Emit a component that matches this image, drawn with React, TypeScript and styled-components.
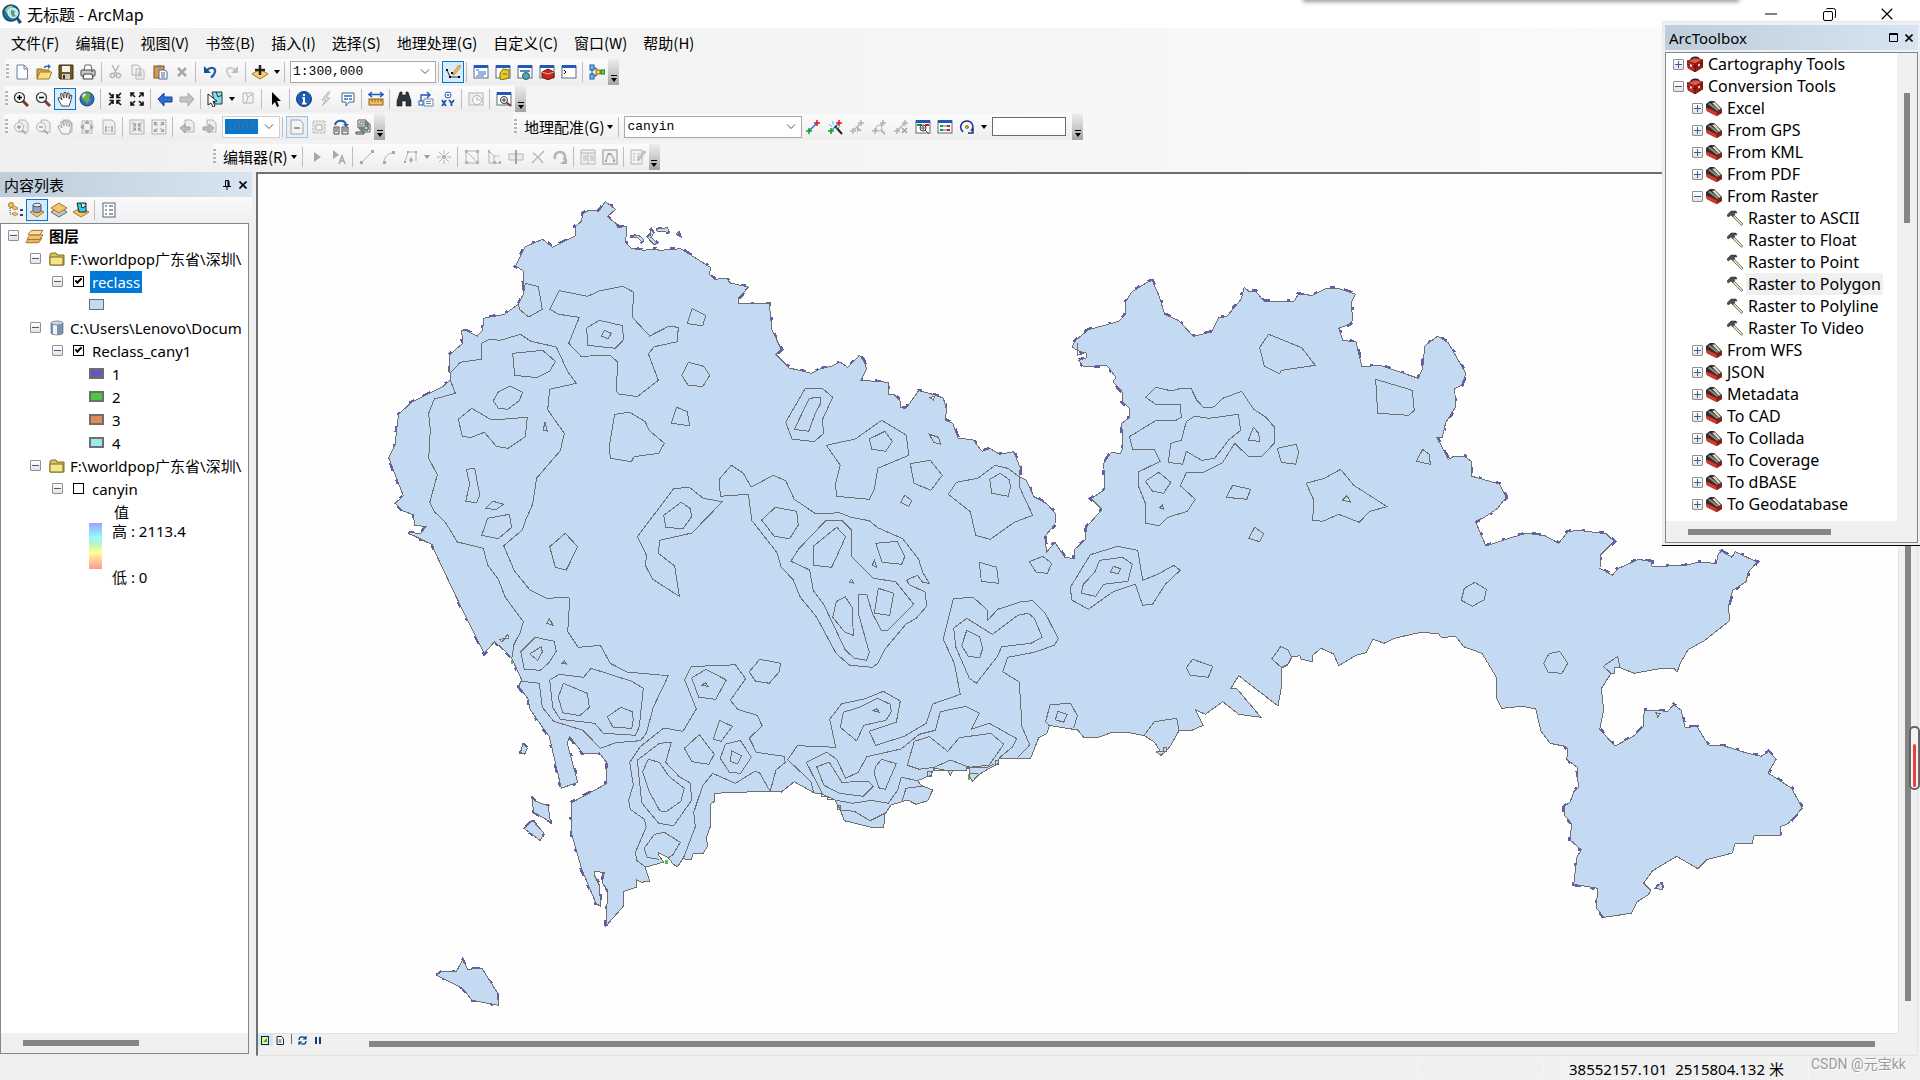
import React from "react";
import styled, { createGlobalStyle, css } from "styled-components";

const UI = `"Noto Sans", "Noto Sans CJK SC", sans-serif`;
const CJK = `"Noto Sans CJK SC", sans-serif`;

const Global = createGlobalStyle`
  *, *::before, *::after { box-sizing: border-box; }
  html, body, #root { height: 100%; }
  body { margin: 0; overflow: hidden; background: #f0f0f0; color: #000; font: 15px/22px ${UI}; }
  button, input, select { font: inherit; color: inherit; margin: 0; padding: 0; border: 0; background: none; border-radius: 0; }
`;

/* ---------- frame ---------- */

const Window = styled.div`
  position: relative;
  height: 100vh;
  display: flex;
  flex-direction: column;
  background: linear-gradient(90deg, #f0f0f0 0%, #f5f5f5 45%, #fafafa 85%);
`;
const TitleBar = styled.header`
  display: flex;
  align-items: center;
  height: 28px;
  padding-left: 2px;
  gap: 5px;
  background: #fff;
  font: 15px/22px ${CJK};
`;
const Title = styled.h1`
  flex: 1;
  margin: 0;
  font-size: 16px;
  font-weight: 400;
`;
const CaptionButton = styled.button`
  width: 58px;
  height: 28px;
  display: grid;
  place-items: center;
`;
const CaptionGroup = styled.div`
  display: flex;
  padding-right: 4px;
`;
const DropShadow = styled.div`
  position: absolute;
  top: -6px;
  right: 182px;
  width: 434px;
  height: 6px;
  box-shadow: 0 1px 4px 1px #999;
`;
const MenuBar = styled.nav`
  display: flex;
  height: 30px;
  padding-left: 3px;
  font: 15px/30px ${CJK};
`;
const MenuItem = styled.button`
  padding: 0 8px;
  line-height: 30px;
`;

/* ---------- toolbars ---------- */

const ToolRow = styled.div<{ $indent?: number; $h: number }>`
  display: flex;
  align-items: center;
  height: ${(p) => p.$h}px;
  padding-left: ${(p) => p.$indent ?? 4}px;
`;
const Bar = styled.div<{ $after?: number }>`
  display: flex;
  align-items: center;
  height: 26px;
  margin-left: ${(p) => p.$after ?? 0}px;
  background: linear-gradient(#fbfbfb, #f4f4f4 60%, #ededed);
  border-radius: 3px 0 0 3px;
`;
const Handle = styled.span`
  width: 3px;
  height: 16px;
  margin: 0 2px 0 1px;
  background: repeating-linear-gradient(#b4b4b4 0 2px, transparent 2px 4px);
`;
const Sep = styled.span`
  width: 1px;
  height: 20px;
  margin: 0 3px 0 2px;
  background: #bdbdbd;
`;
const ToolButton = styled.button<{ $on?: boolean; $soft?: boolean }>`
  width: 22px;
  height: 22px;
  display: grid;
  place-items: center;
  flex: none;
  ${(p) => p.$on && css`background: #d9ebf9; box-shadow: inset 0 0 0 1px #0078d7;`}
  ${(p) => p.$soft && css`background: #e8eef3; box-shadow: inset 0 0 0 1px #9cc3e0;`}
`;
const CaretButton = styled.button`
  width: 11px;
  height: 22px;
  display: grid;
  place-items: center;
`;
const Caret = styled.i<{ $dim?: boolean }>`
  border: 3px solid transparent;
  border-top: 4px solid ${(p) => (p.$dim ? "#9a9a9a" : "#000")};
  border-bottom: 0;
`;
const Overflow = styled.button`
  width: 11px;
  height: 26px;
  display: flex;
  flex-direction: column;
  align-items: center;
  justify-content: flex-end;
  gap: 2px;
  padding-bottom: 3px;
  background: linear-gradient(#ececec, #c9c9c9 55%, #a2a2a2);
  &::before { content: ""; width: 6px; height: 1px; background: #000; }
`;
const BarMenu = styled.button`
  display: flex;
  align-items: center;
  gap: 3px;
  padding: 0 3px 0 5px;
  font: 15px/22px ${CJK};
`;
const ComboBox = styled.label<{ $w: number; $faded?: boolean }>`
  position: relative;
  display: flex;
  align-items: center;
  width: ${(p) => p.$w}px;
  height: 22px;
  margin-left: 2px;
  background: #fff;
  border: 1px solid ${(p) => (p.$faded ? "#cfcfcf" : "#a8a8a8")};
  select {
    appearance: none;
    width: 100%;
    height: 20px;
    padding: 0 20px 0 2px;
    outline: 0;
    font: 13px/20px "Liberation Mono", monospace;
    ${(p) => p.$faded && css`
      color: #4c6f90;
      background: linear-gradient(#0078d7, #0078d7) 2px 2px / 33px 15px no-repeat;
      opacity: 1;
    `}
  }
  svg { position: absolute; right: 5px; pointer-events: none; }
`;
const RotateBox = styled.input`
  width: 74px;
  height: 19px;
  margin: 0 6px 0 3px;
  background: #fff;
  border: 1px solid #6b6b6b;
`;

/* ---------- workspace ---------- */

const Workspace = styled.main`
  flex: 1;
  min-height: 0;
  display: flex;
  gap: 4px;
  background: #f0f0f0;
`;
const Contents = styled.aside`
  width: 252px;
  display: flex;
  flex-direction: column;
  padding-bottom: 2px;
`;
const PanelHead = styled.div`
  display: flex;
  align-items: center;
  justify-content: flex-end;
  gap: 4px;
  height: 25px;
  flex: none;
  padding: 0 3px 0 4px;
  background: linear-gradient(90deg, #bfcddb, #d7e4f2);
  h2 { flex: 1; margin: 0; font: 400 15px/24px ${UI}; }
  button { width: 12px; height: 16px; display: grid; place-items: center; }
`;
const ContentsTools = styled.div`
  display: flex;
  align-items: center;
  height: 26px;
  flex: none;
  padding-left: 4px;
  background: linear-gradient(#fafafa, #efefef);
`;
const TreeBox = styled.div<{ $inset?: number }>`
  flex: 1;
  min-height: 0;
  display: flex;
  flex-direction: column;
  margin-right: ${(p) => p.$inset ?? 0}px;
  border: 1px solid #828790;
  background: #fff;
`;
const TreeBody = styled.div`
  flex: 1;
  min-height: 0;
  display: flex;
`;
const Tree = styled.ul<{ $size?: number }>`
  flex: 1;
  min-width: 0;
  margin: 0;
  padding: 0;
  list-style: none;
  overflow: hidden;
  font-size: ${(p) => p.$size ?? 15}px;
`;
const Node = styled.li<{ $pad: number; $h: number; $gap: number; $bold?: boolean }>`
  display: flex;
  align-items: center;
  height: ${(p) => p.$h}px;
  padding-left: ${(p) => p.$pad}px;
  gap: ${(p) => p.$gap}px;
  font-weight: ${(p) => (p.$bold ? 700 : 400)};
  white-space: pre;
  svg { flex: none; }
`;
const IconSlot = styled.span`
  display: flex;
  padding-left: 3px;
`;
const Expander = styled.button<{ $open?: boolean }>`
  width: 11px;
  height: 11px;
  flex: none;
  border: 1px solid #919191;
  border-radius: 1px;
  background:
    linear-gradient(#3c5a9c, #3c5a9c) center / 7px 1px no-repeat,
    linear-gradient(#3c5a9c, #3c5a9c) center / 1px ${(p) => (p.$open ? 0 : 7)}px no-repeat,
    linear-gradient(#fff, #e2e2e2);
`;
const Check = styled.label`
  display: flex;
  align-items: center;
  gap: 6px;
  input {
    appearance: none;
    width: 11px;
    height: 11px;
    border: 1px solid #000;
    background: #fff;
  }
  input:checked::after {
    content: "";
    display: block;
    width: 7px;
    height: 4px;
    margin: 1px;
    border-left: 2px solid #000;
    border-bottom: 2px solid #000;
    transform: rotate(-45deg);
  }
`;
const LayerName = styled.span<{ $state?: "selected" | "hover" }>`
  padding: 0 2px;
  line-height: 22px;
  ${(p) => p.$state === "selected" && css`background: #0078d7; color: #fff;`}
  ${(p) => p.$state === "hover" && css`background: #f0f0f0;`}
`;
const Swatch = styled.i<{ $c: string; $thin?: boolean }>`
  width: 15px;
  height: 11px;
  border: ${(p) => (p.$thin ? 1 : 2)}px solid #6e6e6e;
  background: ${(p) => p.$c};
`;
const RampRow = styled.li`
  display: flex;
  gap: 10px;
  height: 58px;
  padding-left: 88px;
`;
const Ramp = styled.i`
  width: 13px;
  height: 46px;
  background: linear-gradient(#9ca4ff, #96fbff 32%, #b6f5c4 45%, #ffff96 65%, #ff9696);
`;
const RampLabels = styled.div`
  display: flex;
  flex-direction: column;
  justify-content: space-between;
  height: 62px;
  line-height: 16px;
`;
const ScrollTrack = styled.div<{ $vertical?: boolean; $size: number; $from: string; $to: string }>`
  flex: none;
  display: flex;
  align-items: center;
  justify-content: center;
  background: #f0f0f0;
  ${(p) =>
    p.$vertical
      ? css`width: ${p.$size}px; padding: ${p.$from} 0 ${p.$to};`
      : css`height: ${p.$size}px; padding: 0 ${p.$to} 0 ${p.$from};`}
  &::before {
    content: "";
    background: #858585;
    ${(p) => (p.$vertical ? css`width: 6px; height: 100%;` : css`height: 6px; width: 100%;`)}
  }
`;

const MapFrame = styled.section`
  flex: 1;
  min-width: 0;
  display: flex;
  flex-direction: column;
  margin-right: 2px;
  border: 2px solid #6f6f6f;
  border-right: 1px solid #e3e3e3;
  border-bottom: 1px solid #e3e3e3;
`;
const MapRow = styled.div`
  flex: 1;
  min-height: 0;
  display: flex;
`;
const Canvas = styled.div`
  flex: 1;
  min-width: 0;
  overflow: hidden;
  background: #fefefe;
  border-right: 1px solid #e3e3e3;
  border-bottom: 1px solid #e3e3e3;
  svg { display: block; }
`;
const MapFoot = styled.div`
  display: flex;
  height: 21px;
  flex: none;
  background: #f0f0f0;
  > div:last-child { flex: 1; }
`;
const ViewButtons = styled.div`
  display: flex;
  align-items: flex-start;
  width: 71px;
`;
const ViewButton = styled.button<{ $on?: boolean }>`
  width: 15px;
  height: 12px;
  display: grid;
  place-items: center;
  background: ${(p) => (p.$on ? "#cce8ff" : "none")};
`;
const ViewSep = styled.i`
  width: 1px;
  height: 10px;
  margin: 0 3px;
  background: #6d6d6d;
`;

const StatusBar = styled.footer`
  display: flex;
  align-items: center;
  justify-content: flex-end;
  height: 24px;
  flex: none;
  gap: 2px;
  background: #f0f0f0;
  font: 15px/22px ${UI};
`;
const Cell = styled.span<{ $w: number }>`
  width: ${(p) => p.$w}px;
  height: 22px;
  padding-left: 2px;
  border: 1px solid #f5f5f5;
  white-space: pre;
  line-height: 22px;
`;
const Watermark = styled.span`
  width: 109px;
  height: 24px;
  font: 14px/17px Roboto, ${CJK};
  color: #9b9b9b;
  text-shadow: 1px 1px 0 #fff;
`;
const Gauge = styled.div`
  position: absolute;
  right: 0;
  top: 726px;
  width: 11px;
  height: 64px;
  padding: 16px 2px 1px;
  border: 2px solid #666;
  border-radius: 5px;
  background: #f4f4f6;
  &::before { content: ""; display: block; width: 3px; height: 100%; border-radius: 2px; background: #f03c3c; }
`;

const Toolbox = styled.aside`
  position: absolute;
  top: 21px;
  right: 0;
  width: 258px;
  height: 525px;
  display: flex;
  flex-direction: column;
  gap: 2px;
  padding: 4px 2px 2px 3px;
  background: #f0f0f0;
  border-bottom: 1px solid #000;
  box-shadow: inset 1px 1px 0 #e6e6e6;
`;

/* ---------- icons ---------- */

const g = "#b4b4b4";
const win = (
  <>
    <rect x="1" y="2" width="14" height="12" fill="#fff" stroke="#5a6a80" />
    <rect x="1" y="1" width="14" height="3" fill="#2458b8" />
  </>
);
const lens = (s: string, f: string, h: string) => (
  <>
    <path d="M10 10l5 5" stroke={h} strokeWidth="3" />
    <circle cx="6.500" cy="6.500" r="5" fill={f} stroke={s} strokeWidth="1.200" />
  </>
);
const arrowsIn = (c: string) => (
  <path d="M2 2l4 4M14 2l-4 4M2 14l4-4M14 14l-4-4M6 3v3.500H2.500M10 3v3.500h3.500M6 13V9.500H2.500M10 13V9.500h3.500" stroke={c} strokeWidth="1.600" fill="none" />
);
const arrowsOut = (c: string) => (
  <path d="M2 2l4 4M14 2l-4 4M2 14l4-4M14 14l-4-4M2 5.500V2h3.500M14 5.500V2h-3.500M2 10.500V14h3.500M14 10.500V14h-3.500" stroke={c} strokeWidth="1.600" fill="none" />
);
const pageG = <path d="M6 1h6l3 3v9H6z" fill="#eee" stroke={g} />;
const handPath = "M5 15L2 10 1 7l2-.5L5 9 3.500 3l1.500-.5L7 7V1.500h1.800L9.500 7l1-5 1.700.3L12 8l1.500-4 1.500.5L13.500 11 12 15z";
const link = (c1: string, c2: string, c3: string) => (
  <>
    <path d="M4 12L11 5" stroke={c2} strokeWidth="1.500" />
    <path d="M4 9v6M1 12h6" stroke={c1} strokeWidth="1.500" />
    <path d="M12 1v6M9 4h6" stroke={c3} strokeWidth="1.500" />
  </>
);

const icons: Record<string, React.ReactNode> = {
  newDoc: <path d="M3 1h7l3.500 3.500V15H3zM10 1v4h3.500" fill="#fdfeff" stroke="#6a7f9c" />,
  open: (
    <>
      <path d="M1 5h5l1 1h6v3H5l-3 6H1z" fill="#d9a63c" stroke="#8f6a1c" />
      <path d="M4 8h12l-3 7H1z" fill="#f9dc86" stroke="#a47c26" />
      <path d="M8 4c1-2 3-2 5-1.500" stroke="#2b62b8" strokeWidth="1.500" />
      <path d="M12 0l3 2.500-3 2.500z" fill="#2b62b8" />
    </>
  ),
  save: (
    <>
      <path d="M1 1h14v14H2l-1-1z" fill="#6d5b1e" stroke="#40370f" />
      <rect x="4" y="2" width="8" height="6" fill="#f2f2f2" />
      <rect x="4" y="10" width="8" height="5" fill="#c8c8c8" />
      <rect x="5" y="11" width="2" height="4" fill="#333" />
    </>
  ),
  print: (
    <>
      <path d="M4 6l1-5h6l1 5" fill="#fff" stroke="#666" />
      <rect x="1" y="6" width="14" height="6" rx="1" fill="#c9c9c9" stroke="#3e3e3e" />
      <path d="M4 10h8l1 5H3z" fill="#fff" stroke="#3e3e3e" />
      <rect x="11" y="7" width="2" height="1" fill="#2a9b2a" />
    </>
  ),
  cut: <path d="M4 1l5 9M11 1L6 10M6 10a2 2 0 11-3 3 2 2 0 013-3zM9 10a2 2 0 113 3 2 2 0 01-3-3z" fill="none" stroke={g} strokeWidth="1.500" />,
  copy: <path d="M2 1h6l2 2v8H2zM6 5h6l2 2v8H6zM8 8h4M8 10h4M8 12h4" fill="#f2f2f2" stroke={g} />,
  paste: (
    <>
      <rect x="2" y="2" width="10" height="12" fill="#d99a4a" stroke="#7d5313" />
      <rect x="5" y="1" width="4" height="3" fill="#888" />
      <path d="M7 6h6l2 2v7H7zM9 9h4M9 11h4M9 13h4" fill="#fff" stroke="#44629c" />
    </>
  ),
  del: <path d="M4 4l8 8M12 4l-8 8" stroke="#a8a8a8" strokeWidth="2.500" />,
  undo: (
    <>
      <path d="M5 6c4-4 9-2 8 2-.5 2-2 4-4 5.500" stroke="#1f5fb4" strokeWidth="2.200" />
      <path d="M2 2v7h7z" fill="#1a4f9c" />
    </>
  ),
  redo: (
    <>
      <path d="M11 6C7 2 2 4 3 8c.5 2 2 4 4 5.500" stroke="#cfcfcf" strokeWidth="2.200" />
      <path d="M14 2v7H7z" fill="#bdbdbd" />
    </>
  ),
  add: (
    <>
      <path d="M8 5l8 5-8 5-8-5z" fill="#f7d06b" stroke="#a8761d" />
      <path d="M8 1v10M3 6h10" stroke="#222" strokeWidth="2.500" />
    </>
  ),
  editor: (
    <>
      <path d="M2 6l3 7h9" stroke="#333" />
      <path d="M1 5h2v2H1zM4 12h2v2H4zM13 12h2v2h-2zM6 8h2v2H6z" fill="#000" />
      <path d="M8 9L14 1l2 1.500L10 10l-2 1z" fill="#f7c24a" stroke="#b66d2b" strokeWidth=".7" />
    </>
  ),
  winToc: <>{win}<path d="M3 6h3M5 8h8M5 10h8M3 12h8" stroke="#2b6dd0" /></>,
  winCatalog: <>{win}<path d="M5 9l3-4 6 1v8l-8 2-1-1z" fill="#e8c72a" stroke="#7d6a08" /><path d="M8 10h4" stroke="#7d6a08" /></>,
  winSearch: <>{win}<path d="M3 7h10" stroke="#5b87c8" strokeWidth="2" /><circle cx="9" cy="12" r="3.500" fill="#4aa0d8" stroke="#28653c" /><path d="M8 10l3 1-2 3z" fill="#5dbb4f" /></>,
  winToolbox: <>{win}<path d="M3 8l6-3 6 3v5l-6 3-6-3z" fill="#c8261c" stroke="#701008" /><path d="M3 8l6 2 6-2" stroke="#f4a59b" fill="none" /></>,
  winPython: <>{win}<path d="M3 6l2 2-2 2" stroke="#000" fill="none" /></>,
  model: (
    <>
      <path d="M3 5v6M5 4h2l2 4-2 4H5M10 8h3" stroke="#333" fill="none" />
      <rect x="1" y="1" width="4" height="5" fill="#6fb7f2" stroke="#1e5ca8" />
      <rect x="1" y="10" width="4" height="5" fill="#6fb7f2" stroke="#1e5ca8" />
      <rect x="7" y="6" width="4" height="4" fill="#f4d94a" stroke="#927a12" />
      <rect x="12" y="6" width="4" height="4" fill="#6bd05b" stroke="#1f7a1f" />
    </>
  ),
  zoomIn: <>{lens("#333", "#f6fbff", "#7b3c2a")}<path d="M4 6.500h5M6.500 4v5" stroke="#000" strokeWidth="1.500" /></>,
  zoomOut: <>{lens("#333", "#f6fbff", "#7b3c2a")}<path d="M4 6.500h5" stroke="#000" strokeWidth="1.500" /></>,
  hand: <path d={handPath} fill="#fff" stroke="#333" strokeWidth=".9" />,
  globe: (
    <>
      <circle cx="8" cy="8" r="7" fill="#2f6fc4" stroke="#173f78" />
      <path d="M5 2c3-1 6 0 7 2l-2 2 1 3-3 4-2-3-3-2c0-3 0-5 2-6z" fill="#6fae3c" />
      <path d="M3 4l3-2 1 2-3 3z" fill="#d7ead0" />
    </>
  ),
  fixedIn: arrowsIn("#111"),
  fixedOut: arrowsOut("#111"),
  back: <path d="M1 8l6-6v4h8v5H7v4z" fill="#2a6fd2" stroke="#1a438c" />,
  fwd: <path d="M15 8L9 2v4H1v5h8v4z" fill="#c4c4c4" stroke="#a8a8a8" />,
  select: (
    <>
      <path d="M5 1h10v12H8z" fill="#7fdff0" stroke="#333" />
      <path d="M9 1l2 5 4-2" stroke="#333" fill="none" />
      <path d="M1 3l9 7-4 .5L8 15l-2 1-2-4-3 2z" fill="#fff" stroke="#222" />
    </>
  ),
  clearSel: <path d="M3 2h10v10H3zM6 2l2 4 5-3M8 6l-2 6" fill="#f3f3f3" stroke={g} />,
  pointer: <path d="M4 1l9 9H9l2 5-2 1-2-5-3 3z" fill="#000" />,
  info: (
    <>
      <circle cx="8" cy="8" r="7.500" fill="#1f5bb5" stroke="#153c7b" />
      <path d="M8 3v2M6.500 7H8v5M6 12.500h4.500" stroke="#fff" strokeWidth="2" fill="none" />
    </>
  ),
  bolt: <path d="M10 1L4 9h4l-4 6 8-8H8l4-6z" fill="#e2e2e2" stroke={g} />,
  popup: <><path d="M2 2h12v9H9l-3 4v-4H2z" fill="#fff" stroke="#44648e" /><path d="M4 5h8M4 8h4M9 8h3" stroke="#2d6cc4" strokeWidth="1.500" /></>,
  measure: <><path d="M1 3.500h14M4 1L1 3.500 4 6M12 1l3 2.500L12 6" stroke="#1d58b4" fill="none" strokeWidth="1.500" /><rect x="1" y="8" width="14" height="6" fill="#f2bf62" stroke="#8e5e16" /><path d="M4 8v3M7 8v3M10 8v3M13 8v3" stroke="#8e5e16" /></>,
  find: <path d="M4 1h2v3h4V1h2l3 9v5h-5v-5H6v5H1v-5z" fill="#2c3540" stroke="#111" strokeWidth=".6" />,
  route: <><path d="M3 10V4h8M9 1l3 3-3 3" stroke="#1d58b4" fill="none" strokeWidth="1.300" /><path d="M6 8h9v7H6zM8 10.500h5M8 12.500h5" fill="#fff" stroke="#6d87ad" /><rect x="1" y="10" width="4" height="4" fill="#fff" stroke="#1d58b4" /></>,
  xy: <><circle cx="8" cy="4" r="3" fill="#fff" stroke="#1d58b4" /><circle cx="8" cy="4" r="1" fill="#1d58b4" /><path d="M2 9l4 6M6 9l-4 6M9 9l2.500 3L14 9M11.500 12v3" stroke="#1d58b4" strokeWidth="1.800" fill="none" /></>,
  time: <><rect x="1" y="2" width="14" height="12" fill="#eee" stroke={g} /><circle cx="9" cy="9" r="4.500" fill="#f8f8f8" stroke={g} /><path d="M9 6v3h3" stroke={g} fill="none" /></>,
  viewer: <>{win}<path d="M10 11l5 4" stroke="#7b3c2a" strokeWidth="2" /><circle cx="8" cy="9" r="3.500" fill="#fff" stroke="#333" /><path d="M6 9h4M8 7v4" stroke="#333" /></>,
  pgZoomIn: <>{pageG}<circle cx="6" cy="8" r="4.500" fill="#f4f4f4" stroke={g} /><path d="M4 8h4M6 6v4M9 11l4 4" stroke="#a0a0a0" strokeWidth="1.500" /></>,
  pgZoomOut: <>{pageG}<circle cx="6" cy="8" r="4.500" fill="#f4f4f4" stroke={g} /><path d="M4 8h4M9 11l4 4" stroke="#a0a0a0" strokeWidth="1.500" /></>,
  pgHand: <>{pageG}<path d={handPath} fill="#f4f4f4" stroke="#a6a6a6" /></>,
  pgWhole: <><rect x="3" y="2" width="10" height="12" fill="#f0f0f0" stroke={g} /><path d="M8 1l3 4H5zM8 15l3-4H5zM1 8l4-3v6zM15 8l-4-3v6z" fill="#a9a9a9" /></>,
  pgOne: <><path d="M2 1h9l3 3v11H2z" fill="#f0f0f0" stroke={g} /><path d="M5 7v6M11 7v6M8 8v1M8 11v1" stroke="#a0a0a0" strokeWidth="1.500" /></>,
  pgIn: <><rect x="1" y="1" width="14" height="14" fill="#f0f0f0" stroke={g} /><g transform="translate(2 2) scale(.75)">{arrowsIn("#a0a0a0")}</g></>,
  pgOut: <><rect x="1" y="1" width="14" height="14" fill="#f0f0f0" stroke={g} /><g transform="translate(2 2) scale(.75)">{arrowsOut("#a0a0a0")}</g></>,
  pgBack: <>{pageG}<path d="M1 9l5-4v3h5v3H6v3z" fill="#bcbcbc" stroke="#a0a0a0" /></>,
  pgFwd: <>{pageG}<path d="M13 9L8 5v3H2v3h6v3z" fill="#bcbcbc" stroke="#a0a0a0" /></>,
  draft: <><path d="M2 1h9l3 3v11H2z" fill="#f4f4f4" stroke="#a4a4a4" /><path d="M5 9h6" stroke="#9c9c9c" strokeWidth="2" /></>,
  focus: <><rect x="2" y="2" width="12" height="12" fill="#e4e4e4" stroke={g} strokeDasharray="2 1" /><path d="M5 6h6v5H5z" fill="#f6f6f6" stroke={g} /></>,
  layout: <><path d="M2 6c1-5 9-6 11-1" stroke="#1d5fa9" strokeWidth="2" /><path d="M10 5h6l-3 3z" fill="#1d5fa9" /><path d="M1 8h5v7H1zM9 8h6v7H9zM2 10h3M2 12h3M10 10h4M10 12h4" fill="#f3f3f3" stroke="#444" /></>,
  pages: <><path d="M3 1h8v8H3zM5 3h8v8H5zM7 5h8v8H7z" fill="#fff" stroke="#555" /><path d="M9 7h4v4H9z" fill="#b9dcb6" stroke="#2e6c2c" /><path d="M1 13h8v2H1z" fill="#ddd" stroke="#444" /></>,
  ctrl: link("#129a2a", "#2b6fd0", "#e41414"),
  autoCtrl: <>{link("#129a2a", "#2b9fe0", "#e41414")}<path d="M8 7l7 8" stroke="#222" strokeWidth="2" /><path d="M2 5l3 3M6 2v4M9 9l4-1" stroke="#56b8ee" /></>,
  ctrlSel: <>{link(g, g, g)}<path d="M8 7l5 5H9l-1 3z" fill={g} /></>,
  ctrlZoom: <>{link(g, g, g)}<circle cx="8" cy="9" r="3" fill="#f4f4f4" stroke={g} /><path d="M10 11l4 4" stroke={g} strokeWidth="2" /></>,
  ctrlDel: <>{link(g, g, g)}<path d="M9 9l5 5M14 9l-5 5" stroke="#a0a0a0" strokeWidth="1.500" /></>,
  geoView: <>{win}<path d="M2 6h5" stroke="#129a2a" strokeWidth="2" /><path d="M10 6h4" stroke="#e41414" strokeWidth="2" /><circle cx="8" cy="9" r="3" fill="#fff" stroke="#333" /><path d="M6 9h4M8 7v4M10 11l4 4" stroke="#7b3c2a" /></>,
  geoTable: <>{win}<path d="M3 7h3M3 11h3" stroke="#129a2a" strokeWidth="2" /><path d="M6 7h4M6 11h4" stroke="#2b6fd0" /><path d="M10 7h3M10 11h3" stroke="#e41414" strokeWidth="2" /></>,
  rotate: <><path d="M4 13C-1 8 3 2 8 2s8 6 4 10M14 9v5H9" stroke="#1f2f8c" strokeWidth="1.500" fill="none" /><circle cx="8" cy="8" r="1.500" fill="#e9b80e" stroke="#333" strokeWidth=".6" /></>,
  edArrow: <path d="M5 3l7 5-7 5z" fill="#a8a8a8" />,
  edArrowA: <><path d="M2 1l6 5-6 4z" fill="#a8a8a8" /><path d="M8 15l3-8 3 8M9 12h4" stroke="#a8a8a8" strokeWidth="1.500" fill="none" /></>,
  edLine: <><path d="M3 13L13 3" stroke={g} /><path d="M1 12h3v3H1zM12 1h3v3h-3z" fill="#a8a8a8" /></>,
  edArc: <><path d="M3 13c0-5 4-9 9-9" stroke={g} fill="none" /><path d="M2 12h3v3H2zM11 2h3v3h-3z" fill="#a8a8a8" /></>,
  edTrace: <><path d="M2 13L5 3h8v9" stroke={g} fill="none" /><path d="M4 2h2v2H4zM12 2h2v2h-2zM1 12h2v2H1zM8 8l2 3-2 3-2-3z" fill="#a8a8a8" /></>,
  edPoint: <><path d="M8 1v4M8 11v4M1 8h4M11 8h4M3 3l3 3M13 3l-3 3M3 13l3-3M13 13l-3-3" stroke={g} /><rect x="6" y="6" width="4" height="4" fill="#b4b4b4" /></>,
  edVerts: <><path d="M2 14V2l12 12zM2 2h12v12" stroke={g} fill="none" /><path d="M1 1h3v3H1zM1 12h3v3H1zM12 12h3v3h-3zM12 1h3v3h-3z" fill={g} /></>,
  edReshape: <><path d="M3 14V2l5 5v7z" stroke={g} /><path d="M8 7h6M10 14h4" stroke={g} strokeDasharray="3 1" /><path d="M2 1h2v3H2zM7 12h3v3H7zM13 12h2v3h-2z" fill={g} /></>,
  edCut: <><path d="M1 5h14v6H1z" fill="#eee" stroke={g} /><path d="M8 1v14" stroke="#a4a4a4" strokeWidth="2" /></>,
  edSplit: <path d="M2 14L14 2M3 4l5 4 5 6" stroke={g} fill="none" strokeWidth="1.300" />,
  edRotate: <><path d="M3 10C2 5 5 3 8 3c5 0 6 5 4 8" stroke={g} strokeWidth="2.500" fill="none" /><path d="M15 9v6H8z" fill={g} /></>,
  edTable: <path d="M1 1h14v14H1zM1 4h14M8 4v11M3 7h4M3 9h4M3 11h4M10 7h4M10 9h4M10 11h4" fill="#f2f2f2" stroke={g} />,
  edSketch: <><rect x="1" y="1" width="14" height="14" fill="#f2f2f2" stroke={g} strokeWidth="1.500" /><path d="M4 12l2-7h3l4 7" stroke={g} strokeWidth="1.500" /><path d="M3 11h2v2H3zM6 4h3v2H6zM11 11h2v2h-2z" fill="#a4a4a4" /></>,
  edCreate: <><path d="M1 1h11v14H1zM3 5h2M3 8h2M3 11h2M7 5h3M7 8h3M7 11h3" fill="#f2f2f2" stroke={g} /><path d="M8 9l6-7 2 1-6 7-2 1z" fill="#ccc" stroke={g} /></>,
  tocOrder: <><path d="M3 4v8h5M8 7h4" stroke="#444" fill="none" strokeDasharray="1 1" /><circle cx="4" cy="3" r="2.500" fill="#f3c374" stroke="#a8761d" /><path d="M8 4l3 2-3 2-3-2zM8 10l3 2-3 2-3-2z" fill="#f3c374" stroke="#a8761d" strokeWidth=".7" /><path d="M13 8h3M13 13h3" stroke="#247" strokeWidth="2" /></>,
  tocSource: <><path d="M1 10l7 5 7-5-7-3z" fill="#f5c865" stroke="#a8761d" /><path d="M4 3v6c0 2 8 2 8 0V3z" fill="#8fa7c4" stroke="#45597a" /><ellipse cx="8" cy="3" rx="4" ry="1.800" fill="#e4ecf5" stroke="#45597a" /></>,
  tocVisible: <><path d="M0 10l8 5 8-5-8-5z" fill="#c4c8cc" stroke="#666" /><path d="M0 6l8 5 8-5-8-5z" fill="#f5c26d" stroke="#a8761d" /></>,
  tocSelect: <><path d="M0 10l8 5 8-5-8-4z" fill="#f5c26d" stroke="#a8761d" /><path d="M4 1h9v9H6z" fill="#35cfe6" stroke="#222" /><path d="M8 1l1 5 4-2" fill="#fff" stroke="#222" /></>,
  tocOptions: <><rect x="2" y="1" width="12" height="14" fill="#fdfdfd" stroke="#4d6680" /><path d="M4 4h2M4 8h2M4 12h2M8 4h4M8 8h4M8 12h4" stroke="#345" strokeWidth="1.200" /></>,
  layers: <><path d="M1 13l3-3h11l-3 4H1z" fill="#f0b45c" stroke="#9a6218" strokeWidth=".8" /><path d="M2 10l3-3h11l-3 4H2z" fill="#f6c77a" stroke="#9a6218" strokeWidth=".8" /><path d="M3 6l3-3h10l-3 4H3z" fill="#fbdca4" stroke="#9a6218" strokeWidth=".8" /></>,
  folder: <><path d="M1 3l2-1h4l1 2h7v10H1z" fill="#dcc55a" stroke="#7c6a1d" /><path d="M1 6h13v8H1z" fill="#f4e68c" stroke="#7c6a1d" /></>,
  db: <><path d="M2 3v10c0 2.500 12 2.500 12 0V3z" fill="#7c92ae" stroke="#5b6d85" strokeWidth=".7" /><path d="M4 4.500v9.500l4 .8V5z" fill="#eef3f8" /><ellipse cx="8" cy="3" rx="6" ry="2" fill="#c8d5e4" stroke="#5b6d85" strokeWidth=".7" /></>,
  redBox: (
    <>
      <path d="M4 4c0-3 7-4 8-1" stroke="#222" strokeWidth="1.500" />
      <path d="M0 5l9-3 7 2-8 4z" fill="#e4584a" stroke="#5e0d07" strokeWidth=".7" />
      <path d="M0 5l8 3v8l-7-4z" fill="#c92a1e" stroke="#5e0d07" strokeWidth=".7" />
      <path d="M8 8l8-4v7l-8 5z" fill="#9b1c12" stroke="#5e0d07" strokeWidth=".7" />
      <path d="M0 8l8 3 8-4" stroke="#4a0a05" strokeWidth=".8" />
      <path d="M3 8l2 1v2l-2-1zM11 8.500l2-1v2l-2 1z" fill="#f2f2f2" />
    </>
  ),
  toolset: (
    <>
      <path d="M0 4l4-3 4 0 8 8v4l-5 2L0 8z" fill="#2e2e2e" />
      <path d="M0 7l11 5v4L1 11z" fill="#d8392b" stroke="#7a140c" strokeWidth=".6" />
      <path d="M11 12l5-3v4l-5 3z" fill="#8f1b12" />
      <path d="M2 4l2-1 9 7-2 1z" fill="#8e8a82" />
      <path d="M6 3l3-1 6 7-2 1z" fill="#e3dac6" stroke="#555" strokeWidth=".6" />
    </>
  ),
  hammer: <><path d="M0 5l4-4 5 0 1 2-3 0 1 2-2 2-2-2-3 2z" fill="#4a4f52" stroke="#222" strokeWidth=".5" /><path d="M7 5l9 9-1.500 1.500L6 7z" fill="#e5dcc0" stroke="#6d6450" strokeWidth=".8" /></>,
};

const Icon = ({ name, size = 16 }: { name: string; size?: number }) => (
  <svg width={size} height={size} viewBox="0 0 16 16" fill="none" aria-hidden>
    {icons[name]}
  </svg>
);

const AppIcon = () => (
  <svg width="20" height="22" viewBox="0 0 20 22" aria-hidden>
    <path d="M13 14l4 7 3-2-5-6z" fill="#17507a" />
    <circle cx="9" cy="10" r="8" fill="#1f6f96" stroke="#154a68" strokeWidth="1.500" />
    <path d="M3 7c2-4 6-5 8-4l-2 3-4 5z" fill="#8fd0a5" />
    <circle cx="11" cy="10" r="5" fill="#bfe6f3" stroke="#e6f5fa" />
    <path d="M9 7l4 1-1 3 2 2-3 1-2-3z" fill="#4f9f6a" />
  </svg>
);
const Chevron = () => (
  <svg width="10" height="6" viewBox="0 0 10 6" aria-hidden>
    <path d="M1 0.500L5 4.500 9 0.500" fill="none" stroke="#555" />
  </svg>
);
const CloseX = ({ s = 8 }: { s?: number }) => (
  <svg width={s} height={s} viewBox="0 0 8 8" aria-hidden>
    <path d="M.5.500l7 7M7.500.5l-7 7" stroke="#000" strokeWidth={s > 8 ? 0.8 : 1.6} />
  </svg>
);

/* ---------- toolbar data: "|" separator, "v" drop arrow, "*" pressed, "~" softly pressed ---------- */

const Tools = ({ list, dim }: { list: string; dim?: boolean }) => (
  <>
    {list.split(" ").map((t, i) => {
      if (t === "|") return <Sep key={i} />;
      if (t === "v") return <CaretButton key={i} aria-label="More"><Caret $dim={dim} /></CaretButton>;
      const name = t.replace(/[*~]/, "");
      return (
        <ToolButton key={i} $on={t[0] === "*"} $soft={t[0] === "~"} aria-label={name}>
          <Icon name={name} />
        </ToolButton>
      );
    })}
  </>
);
const Combo = ({ w, value, label, faded }: { w: number; value: string; label: string; faded?: boolean }) => (
  <ComboBox $w={w} $faded={faded}>
    <select aria-label={label} disabled={faded}><option>{value}</option></select>
    <Chevron />
  </ComboBox>
);
const More = () => <Overflow aria-label="Toolbar options"><Caret /></Overflow>;

type Sheet = "A" | "B" | "C" | "D" | "E" | "F";
const origin: Record<Sheet, [number, number]> = {
  A: [370, 180], B: [370, 600], C: [780, 360], D: [1050, 260], E: [1470, 490], F: [1400, 700],
};
const trace = (parts: string) =>
  parts.split(";").map((part) => {
    const s = part.trim();
    const [ox, oy] = origin[s[0] as Sheet];
    return s.slice(1).trim().split(/\s+/).map((p) => {
      const [x, y] = p.split(",").map(Number);
      return `${(ox + x / 3).toFixed(1)},${(oy + y / 3).toFixed(1)}`;
    }).join(" ");
  }).join(" ");

const coast: { d: string; edge?: boolean }[] = [
  { edge: true, d: "A 683,94 703,65 734,88 709,110 735,130 740,142 767,140 764,186 780,205 818,211 850,207 866,211 929,206 1018,262 1016,285 1031,298 1066,295 1078,309 1132,321 1103,354 1103,372 1195,371 1203,450 1231,508 1214,523 1255,564 1322,580 1350,566" },
  { edge: true, d: "C 120,26 153,18 177,6 200,22 222,0 235,-14 247,0 257,25 240,61 321,67 321,104 340,104 358,124 358,142 374,146 413,92 455,103 487,114 497,150 492,180 515,190 531,234 577,240 603,274 628,266 656,283 698,275 718,324 715,350 735,360 759,410 797,431 823,460 822,492 791,530 797,576 822,547 851,592 880,596 881,568 912,541 917,500 963,448 930,416 972,388 968,310 990,278 1018,280 1026,265 1022,190 1046,172 1045,145 1024,125 1023,95 996,65 1005,52 978,17 906,19 893,0" },
  { edge: true, d: "D 83,300 105,295 107,280 80,272 63,260 75,240 112,209 150,199 203,184 223,165 224,125 242,96 290,66 304,62 324,107 341,163 384,182 427,229 482,216 503,173 527,170 570,118 580,82 594,94 614,94 639,124 729,124 742,103 785,106 827,84 858,84 913,102 902,125 904,182 895,193 863,205 875,241 915,246 932,319 990,317 1102,355 1115,325 1121,258 1160,228 1192,248 1245,341 1232,375 1211,386 1214,440 1184,488 1174,531 1157,531 1192,598 1210,588 1240,588 1260,603 1260,648 1345,672 1366,711 1340,745 1300,772 1273,784 1305,858" },
  { edge: true, d: "E 45,168 130,140 165,130 222,137 263,160 290,125 320,121 405,131 430,154 388,196 387,235 424,256 440,236 503,208 542,215 543,229 640,227 680,217 736,220 742,190 752,184 783,202 793,185 858,216 832,247 825,275 785,301 773,345 775,393" },
  { d: "E 775,393 700,452 651,479 628,520 618,547 610,536 565,536 490,550 447,533 430,533 430,550 420,550 391,596 398,660 386,718" },
  { edge: true, d: "E 386,718 432,768 488,738 516,712 520,660 590,664 608,644 630,660 642,712 678,710 712,765 760,768 830,790; F 1080,169 1103,155 1126,177 1101,219 1172,265 1204,325 1160,371 1139,380 1138,406" },
  { d: "F 1138,406 1060,406 1054,429 1003,429 994,459 917,479 890,506 827,469 755,512 728,549 750,571 742,584 709,605 691,640 608,652" },
  { edge: true, d: "F 608,652 587,625 589,565 518,553 528,470 541,449 507,420 512,371 490,345 490,320 508,305 518,275 532,263 529,202 497,178 501,148 492,139" },
  { d: "F 492,139 447,130 420,93 404,27 365,19 302,25; D 1335,1312 1338,1255 1293,1180 1238,1160 1215,1130 1170,1132 1163,1121 1110,1117 1030,1135 999,1150 966,1138 945,1178 915,1186 863,1217 848,1182 810,1165 786,1185 785,1206 750,1197 747,1187 722,1191 710,1215 691,1225 691,1283 681,1338 563,1247 540,1284 556,1284 630,1372 563,1363 515,1325 463,1363 433,1349 457,1396 420,1412 384,1412 360,1455 345,1474 330,1486 316,1476 328,1474 310,1446 280,1427 230,1417 180,1418 145,1431 98,1432 80,1410 0,1397" },
  { d: "C 805,1097 798,1120 773,1133 748,1197 655,1194 650,1212 625,1225 592,1245 575,1264 565,1250 565,1222 555,1230 515,1233 508,1246 500,1232 460,1224 450,1245 410,1262 420,1276 455,1290 440,1322 405,1333 380,1320 330,1335 312,1362 308,1402 270,1402 190,1382 178,1350 162,1320 125,1303 98,1298 40,1265 0,1297" },
  { d: "B 1236,575 1196,574 1100,577 1029,580 1029,605 1020,612 1018,680 1007,710 1009,740 997,759 967,759 960,780 935,776 920,800 905,792 900,783 890,772 862,758 864,768 878,786 850,794 822,802 836,843 812,847 795,838 795,862 756,875 756,920 705,978" },
  { edge: true, d: "B 705,978 710,870 694,850 700,817 671,815 671,828 685,855 689,920 675,910 633,810 603,705 600,609 705,552 709,490 685,459 635,460 596,410 589,430 620,547 571,565 535,410 475,325 473,300 443,258 452,240 420,170 371,125 340,160 260,0" },
  { edge: true, d: "A 189,1110 185,1095 110,1058 150,1060 165,1040 130,1035 128,1005 97,993 72,970 97,948 53,833 72,795 78,740 83,703 120,668 215,620 238,600 235,525 275,490 272,452 285,452 319,468 335,450 338,415 400,403 443,372 458,340 457,273 434,258 462,200 515,178 545,202 612,168 612,140 630,125 637,100 655,90 683,94" },
];

const islands = [
  "A 778,170 803,166 820,180 812,186 800,174",
  "A 855,148 890,143 895,157 858,154",
  "A 838,145 848,160 840,172 857,188 850,195 838,182 828,170 838,166",
  "A 922,155 926,166 915,162",
  "B 455,431 469,445 461,463 449,458",
  "B 482,590 492,603 532,618 538,665 488,637",
  "B 485,662 518,698 508,722 459,685",
  "B 197,1126 210,1115 255,1116 275,1080 290,1108 333,1105 380,1180 382,1216 303,1201 275,1165",
  "F 782,547 785,569 763,565",
];
const holes = ["B 385,118 400,116 410,104 414,114 400,118 393,125", "F 765,38 778,41 770,50", "C 446,112 460,110 457,120"];

const rings = [
  "A 565,332 650,349 685,333 755,319 787,336 785,413 836,468 893,439 922,442 919,485 850,500 832,521 862,601 799,650 745,642 737,636 739,545 717,526 630,529 593,490 625,412 563,403 536,388",
  "A 685,421 755,437 757,480 733,505 650,496 647,444",
  "A 700,451 721,460 711,476 691,468",
  "A 963,386 1004,406 995,437 949,431",
  "A 952,547 998,559 1016,586 995,620 951,615 932,586",
  "A 917,682 949,695 956,737 901,730",
  "A 731,703 776,697 823,725 833,750 880,790 863,820 789,830 781,845 718,835 715,800",
  "A 425,520 515,511 553,544 537,573 498,593 431,586",
  "A 418,618 455,637 445,662 410,688 382,685 367,662 382,636",
  "A 302,685 362,720 469,712 463,770 411,805 376,799 340,757 298,773 274,768 262,718",
  "A 286,868 311,865 326,945 317,968 284,964 296,911",
  "A 366,964 398,973 374,989 344,985",
  "A 350,1015 415,1003 422,1042 382,1076 332,1066",
  "A 522,725 529,753 517,750",
  "A 583,1060 620,1100 586,1170 553,1162 536,1100",
  "A 908,926 955,922 997,955 1054,965 963,1059 866,1081 862,1120 911,1158 925,1249 845,1198 824,1158 826,1125 799,1070",
  "A 931,967 957,985 962,1010 936,1046 884,1042 878,1006",
  "A 1213,982 1277,994 1282,1035 1256,1076 1210,1069 1172,1020",
  "A 463,310 502,320 514,388 473,411 445,388 443,372 458,340",
  "A 535,1315 546,1336 527,1330",
  "A 1081,856 1117,880 1141,921 1207,886 1244,902 1270,958 1335,1002; C 105,462 175,458 210,472 265,482 290,503 365,536 413,598 425,637 445,670 425,667 409,646 377,660 385,674 434,697 436,740 406,775 374,793 312,868 290,910 275,922 206,916 165,880 106,770 58,712 37,660 0,620; A 1218,1118 1143,1022 1132,943 1048,949 1045,898",
  "B 493,112 550,124 556,153 535,187 508,211 460,208 449,155",
  "B 511,140 514,156 500,181 476,162",
  "B 580,182 586,192 574,190",
  "B 660,205 780,243 817,265 805,380 793,406 697,400 671,370 568,358 545,322 536,240 565,223 638,232",
  "B 577,250 649,280 655,322 626,347 575,338 562,292",
  "B 750,322 784,335 787,360 782,385 726,382 709,350",
  "B 1005,208 1066,240 1034,298 983,292 962,234",
  "B 1003,248 1012,259 992,256",
  "B 1166,178 1229,190 1225,215 1195,250 1153,243 1135,215",
  "B 1046,361 1084,379 1051,424 1027,418",
  "B 985,404 1030,463 1013,493 963,485 940,445",
  "B 1108,421 1141,472 1109,520 1075,517 1048,475 1063,433",
  "B 1082,452 1112,467 1100,492 1078,484",
  "B 901,427 884,487 925,530 959,550 961,602 908,677 863,670 812,608 799,481 865,430",
  "B 832,478 865,487 895,530 940,565 930,604 884,636 866,632 835,575 815,515",
  "C 73,85 124,85 155,112 124,180 128,220 100,245 33,237 14,187",
  "C 85,115 117,112 119,130 103,160 83,214 40,208",
  "C 302,181 376,225 383,286 290,325 280,388 265,418 166,409 164,370 178,316 136,256 223,237",
  "C 312,214 334,244 314,274 272,268 265,237",
  "C 445,223 472,232 479,253 458,247",
  "C 448,301 484,346 450,391 399,370 388,311",
  "C 371,406 392,421 383,439 359,427",
  "C 643,316 680,325 715,350 715,380 755,466 700,487 628,538 584,526 568,455 502,403 526,367 590,355",
  "C 658,340 686,360 688,385 682,409 632,400 626,358",
  "C 785,589 812,610 799,640 766,637 745,605",
  "C 595,607 647,622 653,670 601,664",
  "C 284,550 349,544 371,590 362,613 303,607",
  "C 280,600 287,622 274,616",
  "C 212,658 217,669 205,666",
  "C 167,502 194,530 152,622 97,616 97,559",
  "C 193,710 214,743 217,826 191,816 155,772 166,725",
  "C 292,685 338,700 326,766 280,760",
  "C 134,482 182,481 211,510 212,590 277,655 344,665 398,733 320,811 301,811 274,760 257,703 232,703 232,760 265,877 257,901 220,895 193,870 128,733 97,692 86,630 30,604 52,568",
  "C 557,775 634,823 710,766 742,760 760,775 784,832 750,850 662,860 650,888 586,970 565,955 524,860 518,804",
  "C 557,811 596,830 605,865 596,893 562,889 542,857",
  "C 290,1015 328,1033 331,1055 315,1081 248,1096 227,1143 178,1102 187,1057 238,1041",
  "C 288,1046 294,1057 276,1052",
  "C 400,1144 445,1130 500,1174 535,1133 630,1120 668,1153 625,1215 565,1222 508,1200 460,1222 415,1228 379,1216",
  "C 107,1220 145,1207 182,1267 262,1264 277,1279 247,1309 175,1300 128,1275",
  "C 301,1198 346,1211 313,1288 295,1285 280,1243 283,1222",
  "C 831,1054 859,1063 848,1087 823,1079",
  "C 440,1233 450,1233 450,1248 440,1248",
  "C 643,1200 652,1200 652,1212 643,1212",
  "C 168,1335 178,1335 178,1348 168,1348",
  "D 315,382 362,393 390,385 420,385 437,420 457,442 488,441 515,415 572,394 608,448 645,472 670,501 670,550 632,589 592,589 551,550 514,609 458,637 406,638 388,677 433,718 409,754 350,772 325,797 284,790 283,730 262,677 262,636 328,604 310,568 245,568 235,530 314,482 375,481 391,472 388,433 314,433 284,412",
  "D 430,469 475,475 562,463 569,511 533,540 491,595 452,601 406,574 395,613 352,607 359,550 391,541 406,485",
  "D 607,502 623,520 626,544 592,541",
  "D 323,637 359,667 338,700 305,694 283,664",
  "D 334,736 338,748 326,744",
  "D 679,565 736,553 743,577 734,613 691,607",
  "D 545,676 599,688 587,718 526,712",
  "D 869,628 908,676 1009,740 956,754 925,787 863,763 815,784 785,781 788,720 766,670 820,655",
  "D 888,707 899,727 874,720",
  "D 653,223 752,263 793,316 692,331 685,341 640,318 626,262",
  "D 974,358 1084,391 1090,451 1073,466 980,460",
  "D 1115,568 1135,583 1138,613 1096,604",
  "D 611,802 638,821 626,845 593,835",
  "D 200,859 260,871 275,961 320,943 368,916 388,931 343,973 305,1032 275,1036 253,973 188,994 112,1048 61,1019 59,980 118,884",
  "D 146,901 215,892 244,913 231,964 158,973 134,1009 91,1000 97,973 131,937",
  "D 187,919 209,926 202,941 178,936",
  "D 1271,967 1306,988 1300,1019 1264,1039 1231,1021 1240,985",
  "D 425,1198 485,1219 472,1252 418,1246 406,1223",
  "D 690,1159 711,1170 722,1191 712,1212 691,1222 662,1197",
  "E 234,491 266,484 290,520 273,550 232,547 218,520",
];
const contours = [
  "A 240,577 268,547 331,538 331,490 355,478 388,481 448,463 480,484 556,501 590,575 616,610 536,628 530,689 580,760 568,812 497,894 485,972 465,1018 454,1050 398,1097 430,1172 477,1230 527,1255 593,1252; B 596,0 590,95 622,142 688,136 718,190 767,216 892,227 847,322 826,400 808,422 735,428 688,445 636,391 548,364 514,322 505,250 452,244",
  "A 238,577 238,600 253,640 190,657 173,700 178,750 173,835 199,884 176,968 190,995 222,1025 259,1086 337,1105 350,1155 382,1198 403,1252; B 457,65 448,97 428,135 424,170",
  "B 825,802 796,780 794,755 826,680 820,658 778,628 773,600 787,555 776,487 808,440 878,384 936,394 976,327 941,240 961,199 1046,197 1093,194 1124,236 1078,301 1100,328 1158,346 1174,378 1135,414 1156,457 1240,469 1243,487 1215,510 1198,572 1192,565 1165,517 1150,515 1093,550 1025,520 995,557 968,637 973,680 935,780",
  "B 890,775 905,765 928,727 880,697 850,703 820,745 828,772 864,778",
  "C 98,1298 90,1265 20,1199 49,1157 164,1162 146,1078 182,1031 250,1017 307,994 358,1023 346,1087 265,1114 284,1156 370,1129 436,1090 455,1032 538,1003 520,910 487,838 517,716 577,712 619,750 620,781 650,748 720,725 755,722 793,760 832,836 820,856 760,877 680,892 665,935 715,966 723,1100 746,1155 712,1190",
  "C 125,1303 76,1207 137,1177 167,1198 194,1255 232,1237 257,1190 360,1167 415,1123 463,1111 478,1055 555,1039 595,1060 571,1108 625,1090 707,1136 695,1160 655,1194",
  "C 162,1320 215,1330 270,1321 322,1330 350,1290 361,1252 410,1262",
  "C 178,1350 220,1354 267,1382 312,1360",
  "C 362,1327 375,1285 430,1278",
  "C 122,1300 122,1309 140,1309 140,1318 160,1318",
  "C 460,1222 460,1233 556,1231 556,1222 620,1222 640,1212",
  "C 565,1240 592,1241",
  "C 805,1097 794,1085 807,1034 869,1030 889,1067 878,1105",
  "D 279,1427 310,1385 377,1375 384,1412",
  "D 338,1474 338,1462 347,1462 347,1474 316,1476",
  "D 80,250 80,285 100,280",
  "E 447,533 440,499 397,529 420,550",
];

const MapDrawing = () => (
  <svg width="1642" height="859" viewBox="257 174 1642 859" shapeRendering="crispEdges" role="img" aria-label="Reclassified polygon layer">
    <g fill="none" stroke="#6158b8" strokeWidth="4" strokeDasharray="6 11 3 14 5 9 9 17 3 12">
      {coast.filter((c) => c.edge).map((c) => <polyline key={c.d} points={trace(c.d)} />)}
      {islands.map((d) => <polygon key={d} points={trace(d)} strokeWidth="3" />)}
    </g>
    <g fill="#4ac43c">
      <rect x="520" y="296" width="2" height="4" />
      <rect x="510" y="660" width="2" height="4" />
      <rect x="664" y="860" width="3" height="4" />
      <rect x="967" y="774" width="2" height="6" />
    </g>
    <g fill="#c3daf2" stroke="#6e6e6e">
      <polygon points={coast.map((c) => trace(c.d)).join(" ")} />
      {islands.map((d) => <polygon key={d} points={trace(d)} />)}
    </g>
    <g fill="none" stroke="#6e6e6e">
      {rings.map((d) => <polygon key={d} points={trace(d)} />)}
      {contours.map((d) => <polyline key={d} points={trace(d)} />)}
      {holes.map((d) => <polygon key={d} points={trace(d)} fill="#fff" />)}
    </g>
  </svg>
);

/* ---------- trees ---------- */

const classes = [["1", "#6158b8"], ["2", "#4fc646"], ["3", "#e08a5a"], ["4", "#9beaec"]];

const Group = ({ icon, text }: { icon: string; text: string }) => (
  <Node $pad={29} $h={23} $gap={5}>
    <Expander $open aria-label="Collapse" />
    <IconSlot><Icon name={icon} /></IconSlot>
    <span>{text}</span>
  </Node>
);
const Layer = ({ text, on, selected }: { text: string; on?: boolean; selected?: boolean }) => (
  <Node $pad={51} $h={23} $gap={10}>
    <Expander $open aria-label="Collapse" />
    <Check>
      <input type="checkbox" defaultChecked={on} />
      <LayerName $state={selected ? "selected" : undefined}>{text}</LayerName>
    </Check>
  </Node>
);

const toolsets = ["Excel", "From GPS", "From KML", "From PDF", "From Raster"];
const rasterTools = ["Raster to ASCII", "Raster to Float", "Raster to Point", "Raster to Polygon", "Raster to Polyline", "Raster To Video"];
const moreToolsets = ["From WFS", "JSON", "Metadata", "To CAD", "To Collada", "To Coverage", "To dBASE", "To Geodatabase"];

const ToolNode = ({ level, icon, text, open }: { level: number; icon: string; text: string; open?: boolean }) => (
  <Node $pad={level === 2 ? 61 : 7 + level * 19} $h={22} $gap={3}>
    {level < 2 && <Expander $open={open} aria-label={open ? "Collapse" : "Expand"} />}
    <Icon name={icon} />
    <LayerName $state={text === "Raster to Polygon" ? "hover" : undefined}>{text}</LayerName>
  </Node>
);

const menus = ["文件(F)", "编辑(E)", "视图(V)", "书签(B)", "插入(I)", "选择(S)", "地理处理(G)", "自定义(C)", "窗口(W)", "帮助(H)"];

export default function App() {
  return (
    <Window>
      <Global />
      <TitleBar>
        <AppIcon />
        <Title>无标题 - ArcMap</Title>
        <CaptionGroup>
          <CaptionButton aria-label="Minimize">
            <svg width="12" height="2"><path d="M0 1h12" stroke="#000" /></svg>
          </CaptionButton>
          <CaptionButton aria-label="Restore">
            <svg width="13" height="13" fill="none" stroke="#000"><rect x=".5" y="3.500" width="9" height="9" rx="1.500" /><path d="M3 1.500Q3.500.5 5 .5h5.500q2 0 2 2V8q0 1.500-1 2" /></svg>
          </CaptionButton>
          <CaptionButton aria-label="Close"><CloseX s={12} /></CaptionButton>
        </CaptionGroup>
      </TitleBar>
      <DropShadow />
      <MenuBar>
        {menus.map((m) => <MenuItem key={m}>{m}</MenuItem>)}
      </MenuBar>

      <ToolRow $h={27} $indent={5}>
        <Bar>
          <Handle />
          <Tools list="newDoc open save print | cut copy paste del | undo redo | add v |" />
          <Combo w={146} value="1:300,000" label="Map scale" />
          <Tools list="| *editor | winToc winCatalog winSearch winToolbox winPython | model" />
          <More />
        </Bar>
      </ToolRow>
      <ToolRow $h={27}>
        <Bar>
          <Handle />
          <Tools list="zoomIn zoomOut *hand globe | fixedIn fixedOut | back fwd | select v clearSel | pointer | info bolt popup | measure | find route xy | time | viewer" />
          <More />
        </Bar>
      </ToolRow>
      <ToolRow $h={29}>
        <Bar>
          <Handle />
          <Tools list="pgZoomIn pgZoomOut pgHand pgWhole pgOne | pgIn pgOut | pgBack pgFwd" />
          <Combo w={58} value="100%" label="Page zoom" faded />
          <Tools list="| ~draft focus layout pages" />
          <More />
        </Bar>
        <Bar $after={128}>
          <Handle />
          <BarMenu>地理配准(G) <Caret /></BarMenu>
          <Sep />
          <Combo w={178} value="canyin" label="Georeferencing layer" />
          <Tools list="ctrl autoCtrl ctrlSel ctrlZoom ctrlDel geoView geoTable rotate v" />
          <RotateBox aria-label="Rotation" />
          <More />
        </Bar>
      </ToolRow>
      <ToolRow $h={31} $indent={212}>
        <Bar>
          <Handle />
          <BarMenu>编辑器(R) <Caret /></BarMenu>
          <Tools dim list="| edArrow edArrowA | edLine edArc edTrace v edPoint | edVerts edReshape edCut edSplit edRotate | edTable edSketch | edCreate" />
          <More />
        </Bar>
      </ToolRow>

      <Workspace>
        <Contents>
          <PanelHead>
            <h2>内容列表</h2>
            <button aria-label="Pin">
              <svg width="8" height="10" fill="none" stroke="#000"><path d="M2.500 6V.5h3V6M0 6.500h8M4 7v3" /><path d="M5.500 1v5" strokeWidth="2" /></svg>
            </button>
            <button aria-label="Close"><CloseX /></button>
          </PanelHead>
          <ContentsTools>
            <Tools list="tocOrder *tocSource tocVisible tocSelect | tocOptions" />
          </ContentsTools>
          <TreeBox $inset={3}>
            <TreeBody>
              <Tree>
                <Node $pad={7} $h={23} $gap={6} $bold>
                  <Expander $open aria-label="Collapse" />
                  <Icon name="layers" size={18} />
                  <span>图层</span>
                </Node>
                <Group icon="folder" text="F:\worldpop广东省\深圳\" />
                <Layer text="reclass" on selected />
                <Node $pad={88} $h={23} $gap={8}><Swatch $c="#c3daf2" $thin /></Node>
                <Group icon="db" text="C:\Users\Lenovo\Docum" />
                <Layer text="Reclass_cany1" on />
                {classes.map(([n, c]) => (
                  <Node key={n} $pad={88} $h={23} $gap={8}><Swatch $c={c} /><span>{n}</span></Node>
                ))}
                <Group icon="folder" text="F:\worldpop广东省\深圳\" />
                <Layer text="canyin" />
                <Node $pad={113} $h={23} $gap={0}>值</Node>
                <RampRow>
                  <Ramp />
                  <RampLabels><span>高 : 2113.4</span><span>低 : 0</span></RampLabels>
                </RampRow>
              </Tree>
            </TreeBody>
            <ScrollTrack $size={20} $from="9%" $to="44%" />
          </TreeBox>
        </Contents>

        <MapFrame>
          <MapRow>
            <Canvas><MapDrawing /></Canvas>
            <ScrollTrack $vertical $size={18} $from="0px" $to="33px" />
          </MapRow>
          <MapFoot>
            <ViewButtons>
              <ViewButton $on aria-label="Data view">
                <svg width="9" height="9"><rect x=".5" y=".5" width="7" height="8" fill="#e9f0a0" stroke="#222" /><path d="M2 6l4-4v4z" fill="#4aa052" /></svg>
              </ViewButton>
              <ViewButton aria-label="Layout view">
                <svg width="9" height="9"><path d="M1 .5h4.500L7.500 3v5.500H1z" fill="#fff" stroke="#222" /><path d="M2.500 4h3M2.500 6h3" stroke="#258" /></svg>
              </ViewButton>
              <ViewSep />
              <ViewButton aria-label="Refresh">
                <svg width="9" height="9" fill="none" stroke="#0b3f86" strokeWidth="1.200"><path d="M1 4c0-4 5-4 7-1M8 0v3H5M8 5c0 4-5 4-7 1M1 9V6h3" /></svg>
              </ViewButton>
              <ViewButton aria-label="Pause drawing">
                <svg width="8" height="8"><path d="M2 1v7M6 1v7" stroke="#0b3f86" strokeWidth="2" /></svg>
              </ViewButton>
            </ViewButtons>
            <ScrollTrack $size={19} $from="40px" $to="42px" />
          </MapFoot>
        </MapFrame>
      </Workspace>

      <StatusBar>
        <Cell $w={127} />
        <Cell $w={18} />
        <Cell $w={243}>38552157.101  2515804.132 米</Cell>
        <Watermark>CSDN @元宝kk</Watermark>
      </StatusBar>

      <Gauge />

      <Toolbox>
        <PanelHead>
          <h2>ArcToolbox</h2>
          <button aria-label="Maximize">
            <svg width="9" height="9"><path d="M.5.500h8v8h-8zM0 1.500h9" fill="none" stroke="#000" /></svg>
          </button>
          <button aria-label="Close"><CloseX /></button>
        </PanelHead>
        <TreeBox>
          <TreeBody>
            <Tree $size={16}>
              <ToolNode level={0} icon="redBox" text="Cartography Tools" />
              <ToolNode level={0} icon="redBox" text="Conversion Tools" open />
              {toolsets.map((t) => <ToolNode key={t} level={1} icon="toolset" text={t} open={t === "From Raster"} />)}
              {rasterTools.map((t) => <ToolNode key={t} level={2} icon="hammer" text={t} />)}
              {moreToolsets.map((t) => <ToolNode key={t} level={1} icon="toolset" text={t} />)}
            </Tree>
            <ScrollTrack $vertical $size={20} $from="40px" $to="298px" />
          </TreeBody>
          <ScrollTrack $size={21} $from="22px" $to="86px" />
        </TreeBox>
      </Toolbox>
    </Window>
  );
}
